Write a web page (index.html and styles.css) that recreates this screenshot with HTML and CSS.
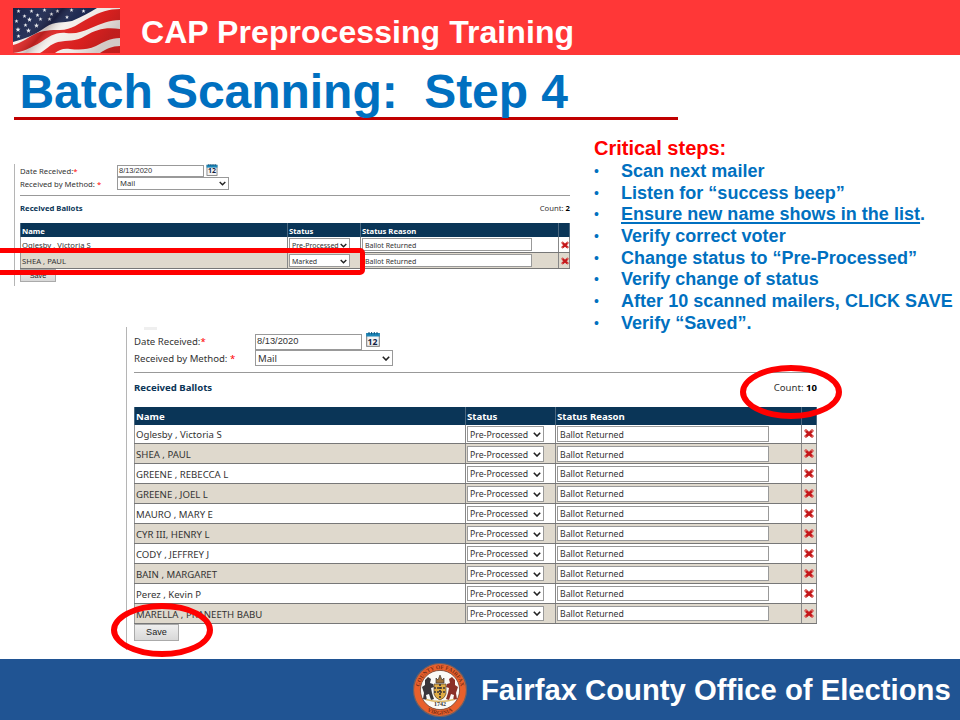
FILE: index.html
```html
<!DOCTYPE html>
<html lang="en">
<head>
<meta charset="utf-8">
<title>CAP Preprocessing Training</title>
<link rel="stylesheet" href="styles.css">
</head>
<body>
<svg width="0" height="0" class="defs">
  <symbol id="calendar" viewBox="0 0 14 15">
    <rect x=".7" y="1.5" width="12.6" height="12.8" fill="#f4f4f4" stroke="#777" stroke-width="1"/>
    <path d="M.2 1h13.6v3.500H.2z" fill="#1c86b8"/>
    <path d="M3 0v2.4M5.6 0v2.4M8.300 0v2.4M11 0v2.4" stroke="#0c4f78" stroke-width="1"/>
  </symbol>
  <symbol id="remove" viewBox="0 0 10 9">
    <path d="M2 1.800 8 7.200M8 1.800 2 7.200" stroke="#d9605c" stroke-width="3" stroke-linecap="square"/>
    <path d="M2.200 2.400 7.800 7.200M7.800 2.400 2.200 7.200" stroke="#c4161a" stroke-width="2.400"/>
  </symbol>
  <symbol id="chevron" viewBox="0 0 8 5"><path d="M.8.8 4 4 7.200.8" fill="none" stroke="#222" stroke-width="1.600"/></symbol>
  <symbol id="star" viewBox="0 0 10 10"><path d="M5 0 6.300 3.500 10 3.700 7.100 6 8.100 9.700 5 7.600 1.900 9.700 2.900 6 0 3.700 3.700 3.500z" fill="#eef0f4"/></symbol>
</svg>
<header class="banner">
  <svg class="flag" viewBox="0 0 107 45" preserveAspectRatio="none">
    <defs>
      <linearGradient id="shade" x1="0" y1="0" x2="1" y2=".35">
        <stop offset="0" stop-color="#301818" stop-opacity=".12"/><stop offset=".25" stop-color="#fff" stop-opacity=".08"/>
        <stop offset=".42" stop-color="#301818" stop-opacity=".24"/><stop offset=".55" stop-color="#fff" stop-opacity=".06"/>
        <stop offset=".8" stop-color="#301818" stop-opacity=".04"/><stop offset="1" stop-color="#301818" stop-opacity=".18"/>
      </linearGradient>
    </defs>
    <rect width="107" height="45" fill="#f6f1ed"/>
    <g fill="#e0201f">
      <path d="M107 1v11C96 12 88 16 78 20 69 24 63 26 53 25 42 24 36 29 28 34 18 40 9 44 0 45v-8c8-2 13-6 20-10 9-5 18-5 27-5 12 0 19-7 29-12C87 4 96 1 107 1z"/>
      <path d="M107 21v9C97 30 91 34 83 38 74 42 66 42 57 41 50 40 46 42 42 45H27c6-3 10-9 18-11 10-2 17 0 27-6 12-7 21-9 35-7z"/>
      <path d="M107 38v7H87c6-4 12-7 20-7z"/>
    </g>
    <path d="M0 0h84C77 4 69 9 59 13 50 15 42 13 33 19 22 27 11 31 0 34z" fill="#14204a"/>
    <use href="#star" x="3" y="1" width="5" height="4"/><use href="#star" x="16" y="1" width="5" height="4"/>
    <use href="#star" x="29" y="0" width="5" height="4"/><use href="#star" x="42" y="1" width="5" height="4"/>
    <use href="#star" x="56" y="0" width="5" height="4"/><use href="#star" x="68" y="1" width="5" height="4"/>
    <use href="#star" x="9" y="6" width="5" height="4"/><use href="#star" x="22" y="5" width="5" height="4"/>
    <use href="#star" x="36" y="4" width="5" height="4"/><use href="#star" x="51" y="7" width="6" height="4"/>
    <use href="#star" x="1" y="11" width="5" height="4"/><use href="#star" x="14" y="9" width="5" height="5"/>
    <use href="#star" x="25" y="9" width="5" height="4"/><use href="#star" x="34" y="9" width="5" height="4"/>
    <use href="#star" x="10" y="15" width="5" height="4"/><use href="#star" x="21" y="15" width="5" height="5"/>
    <use href="#star" x="2" y="19" width="6" height="5"/><use href="#star" x="13" y="20" width="5" height="5"/>
    <use href="#star" x="3" y="26" width="5" height="4"/>
    <rect width="107" height="45" fill="url(#shade)"/>
  </svg>
  <div class="course">CAP Preprocessing Training</div>
</header>
<main>
  <h1>Batch Scanning:&nbsp; Step 4</h1>
  <div class="upper">
    <section class="panel small">
      <div class="field"><label>Date Received:<i>*</i></label><span class="date">8/13/2020</span><span class="cal"><svg><use href="#calendar"/></svg><b>12</b></span></div>
      <div class="field method"><label>Received by Method: <i>*</i></label><span class="pick">Mail<svg class="chev"><use href="#chevron"/></svg></span></div>
      <div class="summary"><strong>Received Ballots</strong><span>Count: <b>2</b></span></div>
      <div class="table" data-rows="2"></div>
      <button>Save</button>
      <div class="mark-row"></div>
    </section>
    <section class="steps">
      <h2>Critical steps:</h2>
      <ul>
        <li><span>Scan next mailer</span></li>
        <li><span>Listen for “success beep”</span></li>
        <li><span><u>Ensure new name shows in the list</u>.</span></li>
        <li><span>Verify correct voter</span></li>
        <li><span>Change status to “Pre-Processed”</span></li>
        <li><span>Verify change of status</span></li>
        <li><span>After 10 scanned mailers, CLICK SAVE</span></li>
        <li><span>Verify “Saved”.</span></li>
      </ul>
    </section>
  </div>
  <section class="panel large">
    <div class="field"><label>Date Received:<i>*</i></label><span class="date">8/13/2020</span><span class="cal"><svg><use href="#calendar"/></svg><b>12</b></span></div>
    <div class="field method"><label>Received by Method: <i>*</i></label><span class="pick">Mail<svg class="chev"><use href="#chevron"/></svg></span></div>
    <div class="summary"><strong>Received Ballots</strong><span>Count: <b>10</b></span></div>
    <div class="table" data-rows="10"></div>
    <button>Save</button>
    <div class="remnant"></div>
    <div class="ring ring-count"></div>
    <div class="ring ring-save"></div>
  </section>
</main>
<footer>
  <svg class="seal" viewBox="0 0 56 56">
    <defs><path id="arc-top" d="M7 28a21 21 0 0 1 42 0"/><path id="arc-bottom" d="M3.500 28a24.500 24.500 0 0 0 49 0"/></defs>
    <circle cx="28" cy="28" r="26.500" fill="#e8602c" stroke="#6b6065" stroke-width="1.200"/>
    <circle cx="28" cy="28" r="19.600" fill="#fbfaf6" stroke="#6e4434" stroke-width=".8"/>
    <g font-family="Liberation Serif" font-weight="bold" font-size="5.600" fill="#7a2f17" text-anchor="middle">
      <text><textPath href="#arc-top" startOffset="50%">COUNTY OF FAIRFAX</textPath></text>
      <text><textPath href="#arc-bottom" startOffset="50%">VIRGINIA</textPath></text>
      <text x="28" y="44" font-size="6" fill="#333">1742</text>
    </g>
    <path d="m13 18 3-3 3 2-1 4 3 1 1 3-3 1 1 5 2 6-3 1-2-6-3 1 1 5-4-1 1-6-2-6 3-2z" fill="#39363a"/>
    <path d="m43 18-3-3-3 2 1 4-3 1-1 3 3 1-1 5-2 6 3 1 2-6 3 1-1 5 4-1-1-6 2-6-3-2z" fill="#8b3027"/>
    <path d="M22 22h12v10q-1 4-6 6-5-2-6-6z" fill="#dfac45" stroke="#514031" stroke-width=".7"/>
    <path d="M22 26h12M22 30h12M28 22v15" stroke="#37333b" stroke-width="1.700" stroke-dasharray="2 1"/>
    <path d="M24 21v-5l2 2 2-5 2 5 2-2v5z" fill="#9d7138" stroke="#413835" stroke-width=".7"/>
    <path d="M14 37.500q14 4 28 0" fill="none" stroke="#d9b564" stroke-width="1.500"/>
  </svg>
  <div class="office">Fairfax County Office of Elections</div>
</footer>
<script src="ballots.js"></script>
</body>
</html>
```
FILE: styles.css
```css
* { box-sizing: border-box; }
body { margin: 0; width: 960px; height: 720px; overflow: hidden; display: flex; flex-direction: column; background: #fff; font-family: "Liberation Sans", Arial, sans-serif; }
.defs { position: absolute; }
.banner { height: 55px; background: #ff3737; display: flex; padding: 8px 13px; gap: 21px; color: #fff; }
.flag { width: 107px; height: 45px; flex: none; }
.course { font-size: 32px; font-weight: bold; line-height: 48px; letter-spacing: .06px; white-space: nowrap; }
main { flex: 1; min-height: 0; }
h1 { margin: 8px 0 0 14px; padding-left: 5.5px; width: 664px; height: 57px; border-bottom: 3px solid #c00000; font-size: 48px; line-height: 57px; letter-spacing: -.04px; color: #0070c0; white-space: nowrap; }
.upper { display: flex; height: 207px; padding-top: 16px; justify-content: space-between; }

.steps { width: 366px; color: #0070c0; font-weight: bold; white-space: nowrap; }
.steps h2 { margin: 0; font-size: 20px; line-height: 24px; color: #f00; }
.steps ul { margin: 1px 0 0; padding: 0; list-style: none; font-size: 18px; line-height: 21.65px; letter-spacing: .03px; }
.steps li { display: flex; }
.steps li::before { content: "•"; width: 27px; font-weight: normal; font-size: 14px; }
.steps u { text-underline-offset: 2px; text-decoration-thickness: 2px; }

.panel { position: relative; border-left: 1px solid #b5b5b5; font-family: "Noto Sans", "Open Sans", sans-serif; color: #333; white-space: nowrap; font-size: var(--fs); }
.small { --fs: 7.7px; --row: 16px; --head: 14px; --ctl: 13px; --label: 97px; --datew: 87px; --pickw: 111.5px; --fieldh: 12px; --statusw: 61px; --reasonw: 170px; --cols: 268px 73px 197.5px 11.500px; margin: 28px 0 0 14px; padding: 1px 0 0 5px; width: 556px; height: 122px; }
.large { --fs: 9.6px; --row: 19.95px; --head: 17.5px; --ctl: 15.5px; --label: 121px; --datew: 106.5px; --pickw: 138px; --fieldh: 15.5px; --statusw: 76.5px; --reasonw: 212px; --cols: 332px 90px 246px 15px; margin: 0 0 0 126px; padding: 7px 0 0 7px; width: 691px; height: 323px; }
.field { display: flex; align-items: center; height: var(--fieldh); }
.field label { width: var(--label); }
.field i { color: #f00; font-style: normal; }
.date, .pick, .sel, .inp { border: 1px solid #999; background: #fff; display: flex; align-items: center; padding-left: 2px; line-height: 1; }
.date { width: var(--datew); height: 100%; padding-left: 1px; font-family: "Liberation Sans", sans-serif; font-size: .97em; }
.pick { width: var(--pickw); height: 100%; justify-content: space-between; padding: 1px 2px 0; }
.sel, .inp { font-size: .91em; padding-top: 2px; }
.cal { position: relative; width: 14px; height: 15px; margin-left: 4px; margin-top: -4px; }
.small .cal { width: 12px; height: 12px; margin-left: 2px; margin-top: -2px; }
.cal svg { display: block; width: 100%; height: 100%; }
.cal b { position: absolute; left: 0; right: 0; bottom: 1px; text-align: center; font-size: .9em; line-height: 1; color: #124; }
.chev { width: 8px; height: 5px; flex: none; margin-top: -1px; }
.small .chev { width: 7px; height: 5px; }
.summary { display: flex; justify-content: space-between; align-items: center; border-top: 1px solid #999; }
.summary strong { color: #0a3557; }
.summary b { color: #000; }
.small .method { height: 13px; margin-top: 0; }
.small .summary { margin-top: 5px; height: 28px; padding-bottom: 3px; }
.large .method { height: 16px; margin-top: .5px; }
.large .summary { margin-top: 6px; height: 35px; padding-bottom: 5px; }
.row { display: grid; grid-template-columns: var(--cols); height: var(--row); border-bottom: 1px solid #777; }
.row > * { display: flex; align-items: center; border-right: 1px solid #888; padding-left: 1px; min-width: 0; }
.row > :first-child { border-left: 1px solid #999; }
.row:not(.head) > :first-child { padding-top: 2px; }
.small .row:not(.head) > :first-child { padding-top: 1px; }
.row.even { background: #dfd9cd; }
.row.head { height: var(--head); background: #0a3557; border-bottom: 0; color: #fff; font-weight: bold; }
.row.head > * { border-color: #4b6880; padding-top: 1px; }
.sel { width: var(--statusw); height: var(--ctl); justify-content: space-between; padding-right: 2px; }
.inp { width: var(--reasonw); height: var(--ctl); }
.del { width: 10px; height: 9px; margin-left: 1px; }
.small .del { width: 8px; height: 8px; }
button { display: block; width: 45px; height: 17px; padding: 0; border: 1px solid #aaa; background: linear-gradient(#efefef, #d8d8d8); font: inherit; font-family: "Liberation Sans", sans-serif; font-size: .95em; color: #222; line-height: 1; }
.small button { width: 36px; height: 13px; }
.mark-row { position: absolute; left: -30px; top: 84px; width: 380px; height: 27px; border: 5px solid #f00; border-radius: 5px; }
.remnant { position: absolute; left: 17px; top: 0; width: 13px; height: 3px; background: #efefef; }
.ring { position: absolute; border: 6px solid #f00; border-radius: 50%; width: 102px; height: 54px; }
.ring-count { left: 613px; top: 38px; }
.ring-save { left: -16px; top: 276px; }

footer { height: 61px; background: #205493; display: flex; align-items: center; padding-left: 412px; color: #fff; }
.seal { width: 56px; height: 58px; flex: none; }
.office { margin: 2px 0 0 13px; font-size: 29.25px; font-weight: bold; white-space: nowrap; }
```
FILE: ballots.js
```js
const voters = ["Oglesby , Victoria S", "SHEA , PAUL", "GREENE , REBECCA L", "GREENE , JOEL L", "MAURO , MARY E", "CYR III, HENRY L", "CODY , JEFFREY J", "BAIN , MARGARET", "Perez , Kevin P", "MARELLA , PRANEETH BABU"];

document.querySelectorAll(".table").forEach(table => {
  const count = Number(table.dataset.rows);
  const rows = voters.slice(0, count).map((name, i) => {
    const status = count === 2 && i === 1 ? "Marked" : "Pre-Processed";
    return `<div class="row ${i % 2 ? "even" : ""}"><div>${name}</div>
      <div><span class="sel">${status}<svg class="chev"><use href="#chevron"/></svg></span></div>
      <div><span class="inp">Ballot Returned</span></div>
      <div><svg class="del"><use href="#remove"/></svg></div></div>`;
  });
  table.innerHTML = `<div class="row head"><div>Name</div><div>Status</div><div>Status Reason</div><div></div></div>` + rows.join("");
});
```
